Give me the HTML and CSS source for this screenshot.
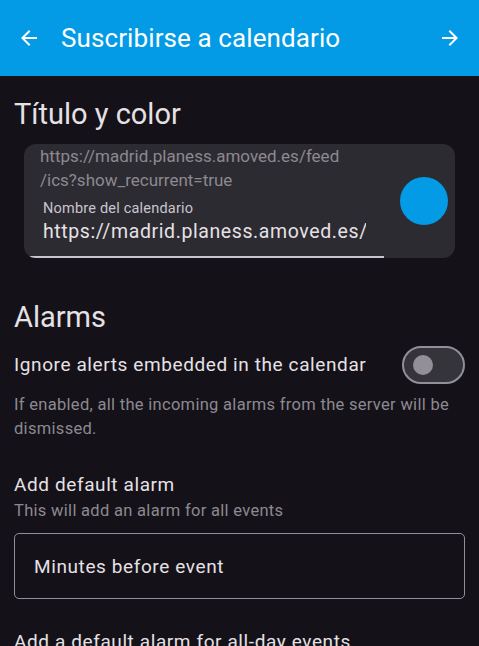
FILE: index.html
```html
<!DOCTYPE html>
<html lang="es">
<head>
    <meta charset="UTF-8">
    <meta name="viewport" content="width=device-width, initial-scale=1.0">
    <title>Suscribirse a calendario</title>
    <link rel="stylesheet" href="styles.css">
</head>
<body>
    <header class="appbar">
        <svg class="appbar-icon" viewBox="0 0 24 24" width="24" height="24">
            <path d="M20 11H7.83l5.59-5.59L12 4l-8 8 8 8 1.41-1.41L7.83 13H20v-2z" fill="#fff"/>
        </svg>
        <h1 class="appbar-title">Suscribirse a calendario</h1>
        <svg class="appbar-icon" viewBox="0 0 24 24" width="24" height="24">
            <path d="M12 4l-1.41 1.41L16.17 11H4v2h12.17l-5.58 5.59L12 20l8-8z" fill="#fff"/>
        </svg>
    </header>

    <main class="content">
        <h2 class="section-title">Título y color</h2>

        <div class="card">
            <div class="card-fields">
                <div class="url-text">https://madrid.planess.amoved.es/feed<br>/ics?show_recurrent=true</div>
                <div class="filled-field">
                    <label class="field-label">Nombre del calendario</label>
                    <div class="field-value">https://madrid.planess.amoved.es/</div>
                </div>
            </div>
            <div class="color-dot"></div>
        </div>

        <h2 class="section-title alarms-title">Alarms</h2>

        <div class="switch-row">
            <span class="row-text">Ignore alerts embedded in the calendar</span>
            <span class="switch"><span class="switch-thumb"></span></span>
        </div>
        <p class="hint">If enabled, all the incoming alarms from the server will be dismissed.</p>

        <div class="setting">
            <div class="row-text">Add default alarm</div>
            <div class="sub-text">This will add an alarm for all events</div>
        </div>
        <div class="outlined-field">Minutes before event</div>

        <div class="setting last-setting">
            <div class="row-text">Add a default alarm for all-day events</div>
        </div>
    </main>
</body>
</html>
```

FILE: styles.css
```css
body {
    font-family: Roboto, "Noto Sans", sans-serif;
    margin: 0;
    padding: 0;
    background-color: #141218;
    color: #e6e1e5;
    height: 646px;
    overflow: hidden;
}

.appbar {
    background-color: #039be5;
    height: 76px;
    display: flex;
    align-items: center;
    padding: 0 17px;
    gap: 20px;
}

.appbar-icon {
    flex: none;
}

.appbar-title {
    flex: 1;
    margin: 0;
    font-size: 26px;
    font-weight: 400;
    color: #fff;
    letter-spacing: 0.1px;
}

.content {
    padding: 0 14px;
}

.section-title {
    margin: 21px 0 13px;
    font-size: 29px;
    font-weight: 400;
    color: #e6e1e5;
    line-height: 34px;
}

.alarms-title {
    margin: 42px 0 12px;
}

.card {
    margin: 0 10px;
    background-color: #2c2b31;
    border-radius: 12px;
    height: 114px;
    display: flex;
    align-items: center;
    overflow: hidden;
}

.card-fields {
    width: 360px;
    height: 114px;
    display: flex;
    flex-direction: column;
}

.url-text {
    padding: 0 0 0 16px;
    font-size: 17px;
    line-height: 24px;
    color: #8c8991;
}

.filled-field {
    flex: 1;
    padding: 8px 18px 0 19px;
    border-bottom: 2px solid #cac4d0;
    overflow: hidden;
}

.field-label {
    display: block;
    font-size: 14.5px;
    line-height: 18px;
    color: #cac4d0;
    letter-spacing: 0.2px;
}

.field-value {
    font-size: 19.5px;
    line-height: 28px;
    letter-spacing: 0.6px;
    white-space: nowrap;
    overflow: hidden;
    color: #e6e1e5;
}

.color-dot {
    width: 48px;
    height: 48px;
    border-radius: 50%;
    background-color: #039be5;
    margin-left: 16px;
}

.switch-row {
    display: flex;
    align-items: center;
    justify-content: space-between;
}

.row-text {
    font-size: 19px;
    letter-spacing: 0.6px;
    line-height: 26px;
    color: #e6e1e5;
}

.switch {
    height: 34px;
    width: 50px;
    border: 2px solid #938f99;
    border-radius: 20px;
    background-color: #36343b;
    display: flex;
    align-items: center;
    padding-left: 9px;
    box-sizing: content-box;
}

.switch-thumb {
    width: 20px;
    height: 20px;
    border-radius: 50%;
    background-color: #938f99;
}

.hint {
    margin: 9px 0 0;
    font-size: 16.5px;
    line-height: 24px;
    color: #8c8991;
    letter-spacing: 0.3px;
}

.setting {
    margin-top: 31px;
}

.sub-text {
    margin-top: 2px;
    font-size: 16.5px;
    line-height: 22px;
    color: #8c8991;
    letter-spacing: 0.3px;
}

.outlined-field {
    margin-top: 11px;
    height: 64px;
    border: 1px solid #938f99;
    border-radius: 5px;
    display: flex;
    align-items: center;
    padding-left: 19px;
    font-size: 19px;
    letter-spacing: 0.6px;
    color: #e6e1e5;
}

.last-setting {
    margin-top: 30px;
}
```
